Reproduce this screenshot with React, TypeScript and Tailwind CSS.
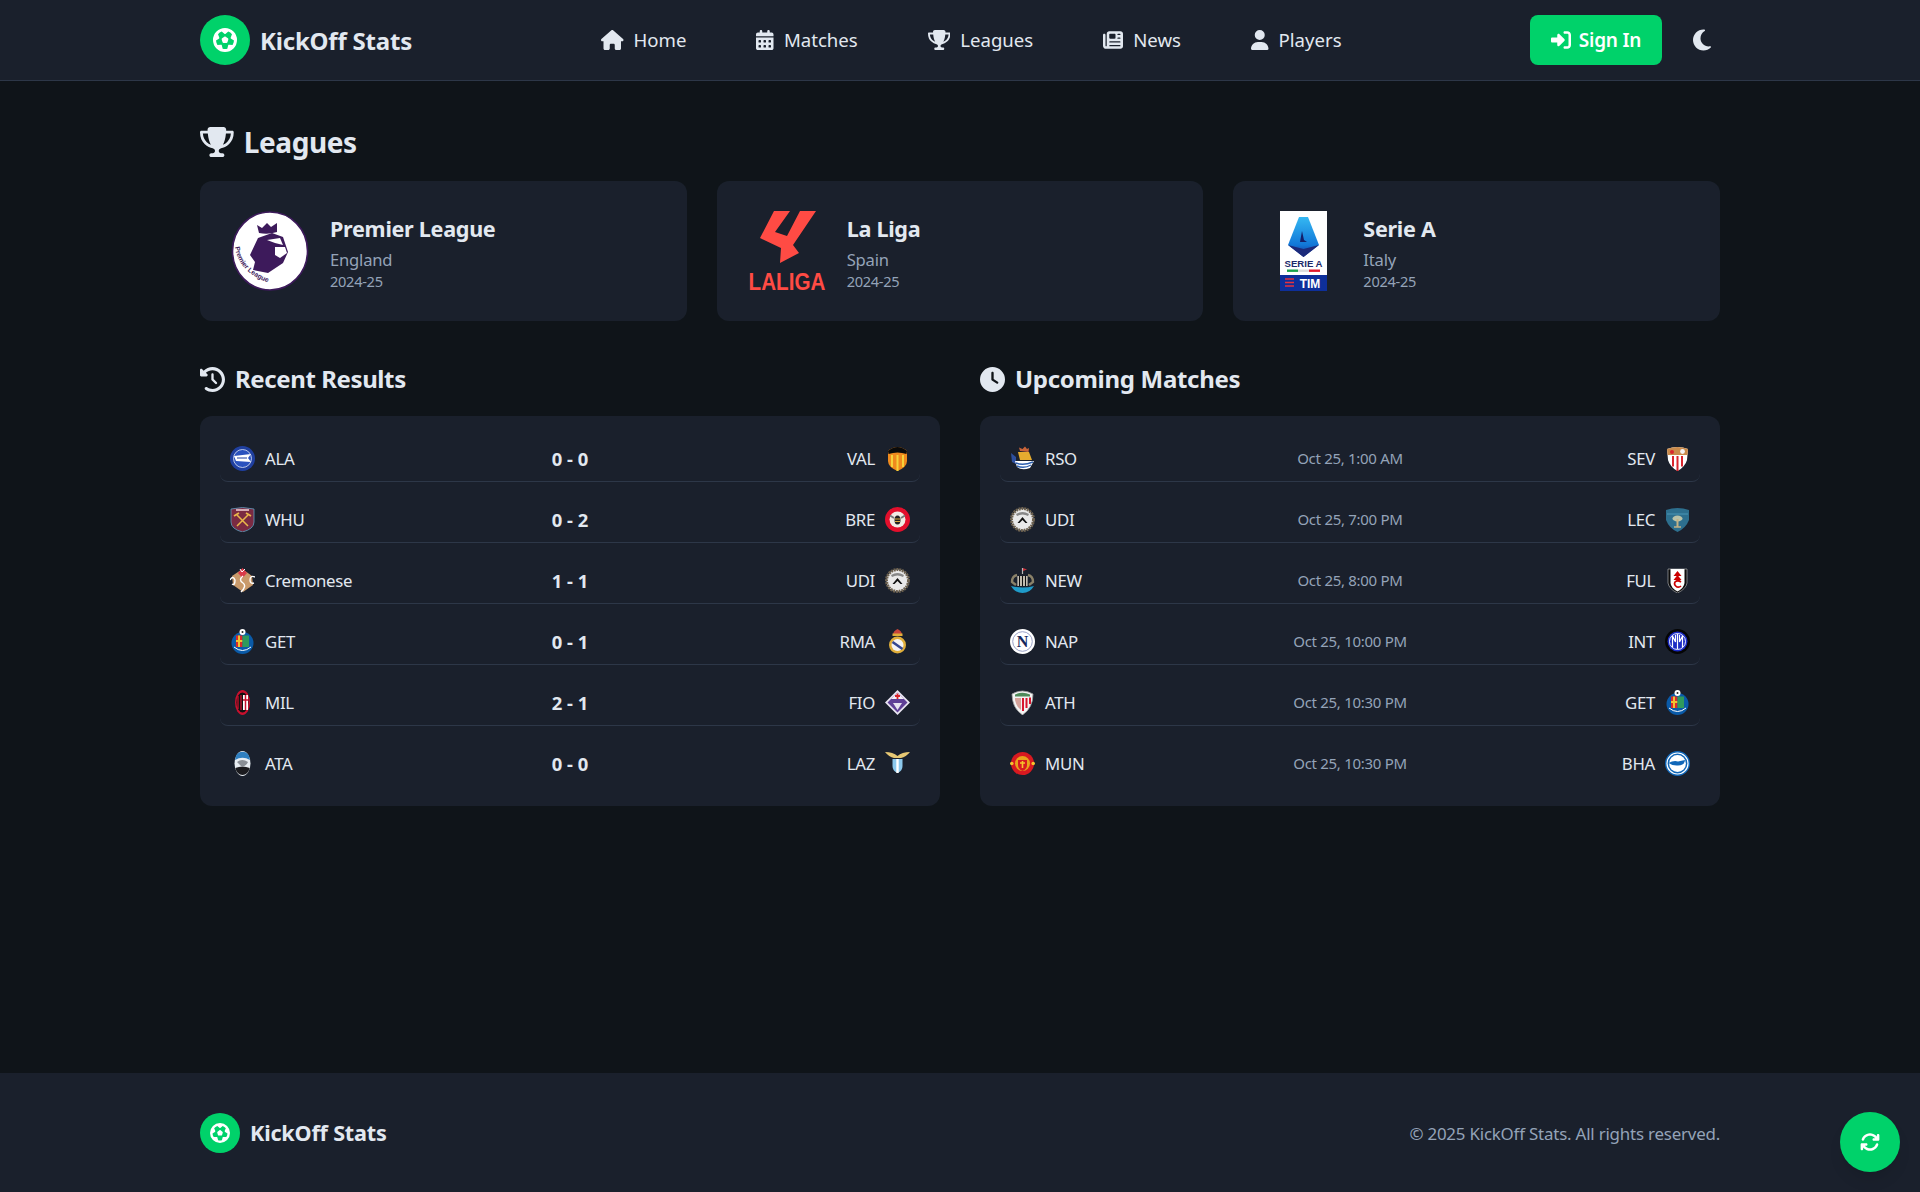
import React from 'react';
import {
  FaArrowsRotate,
  FaCalendarDays,
  FaClock,
  FaClockRotateLeft,
  FaFutbol,
  FaHouse,
  FaMoon,
  FaNewspaper,
  FaRightToBracket,
  FaTrophy,
  FaUser,
} from 'react-icons/fa6';

const crests: Record<string, React.ReactNode> = {
  ALA: (
    <>
      <circle cx="12.5" cy="12.5" r="12.5" fill="#1f3f9f" />
      <circle cx="12.5" cy="12.5" r="9" fill="#2a52be" stroke="#dfe6f5" strokeWidth="0.8" />
      <path d="M4 10 L21 8 L18 12 L21 16 L6 15 Z" fill="#fff" />
      <path d="M7 12 H17" stroke="#1f3f9f" strokeWidth="1" />
    </>
  ),
  WHU: (
    <>
      <path d="M1 2 Q12.5 -1 24 2 V15 Q24 22 12.5 25 Q1 22 1 15 Z" fill="#7a2a42" stroke="#5f9fc0" strokeWidth="0.8" />
      <path d="M7 8 L18 19 M18 8 L7 19" stroke="#eab84a" strokeWidth="1.5" />
      <path d="M4 9 L9 6 M21 9 L16 6" stroke="#eab84a" strokeWidth="1.8" />
      <rect x="6" y="2" width="13" height="2" fill="#d7a9b3" />
    </>
  ),
  Cremonese: (
    <>
      <path d="M12.5 1 L22 8 L23 17 L13 24 L3 17 L2 8 Z" fill="#c99a6b" />
      <path d="M12.5 0 L17 5 L12.5 10 L8 5 Z" fill="#d93a4a" />
      <path d="M10 1 L12 4 L15 1" stroke="#fff" strokeWidth="1" fill="none" />
      <path d="M0 12 Q3 7 5 12 Q5 18 2 16 M25 9 Q20 7 20 12 Q20 16 24 15 M13 8 Q8 12 13 15 Q17 18 11 24" stroke="#fff" strokeWidth="1.4" fill="none" />
    </>
  ),
  GET: (
    <>
      <circle cx="12.5" cy="14" r="11" fill="#0a5aa8" />
      <rect x="6" y="6.5" width="6.5" height="11.5" fill="#d92b2b" />
      <rect x="8" y="6.5" width="2" height="11.5" fill="#f2c230" />
      <rect x="6" y="11" width="6.5" height="2" fill="#f2c230" />
      <rect x="12.5" y="6.5" width="6.5" height="11.5" fill="#2f9a5c" />
      <circle cx="12.5" cy="3" r="3" fill="#fff" />
      <circle cx="12.5" cy="3" r="1" fill="#222" />
      <path d="M4 18 Q12.5 25 21 18" stroke="#fff" strokeWidth="1" fill="none" />
    </>
  ),
  MIL: (
    <>
      <ellipse cx="12.5" cy="12.5" rx="7.5" ry="12.5" fill="#c8102e" />
      <ellipse cx="12.5" cy="12.5" rx="6" ry="10" fill="#111" />
      <path d="M8 6 V19 M11 5 V20" stroke="#c8102e" strokeWidth="1.3" />
      <rect x="13" y="5" width="5" height="15" fill="#fff" />
      <path d="M15.5 5 V20 M13 10 H18" stroke="#c8102e" strokeWidth="1.5" />
    </>
  ),
  ATA: (
    <>
      <ellipse cx="12.5" cy="12.5" rx="8" ry="12.5" fill="#e8edf2" />
      <path d="M5 9 Q5.5 1 12.5 0.8 Q19.5 1 20 9 Q12.5 4.5 5 9 Z" fill="#2f7fc0" />
      <path d="M5.3 17 Q12.5 14 19.7 17 Q18 24 12.5 24 Q7 24 5.3 17 Z" fill="#1b1b1f" />
      <path d="M7 11 Q12 7 18 11 Q16 16 11 15 Z" fill="#8a8f96" />
    </>
  ),
  VAL: (
    <>
      <path d="M3 5 Q12.5 -3 22 5 V15 Q22 21 12.5 25 Q3 21 3 15 Z" fill="#f08a1d" />
      <path d="M7 9 V21 M12.5 9 V25 M18 9 V21" stroke="#f6d23a" strokeWidth="2" />
      <path d="M3 5 Q12.5 -3 22 5 L21.5 8 Q12.5 5 3.5 8 Z" fill="#0a0a0a" />
    </>
  ),
  BRE: (
    <>
      <circle cx="12.5" cy="12.5" r="12.5" fill="#e30f2c" />
      <circle cx="12.5" cy="12.5" r="8" fill="#f1ece4" />
      <ellipse cx="12.5" cy="13" rx="3" ry="4.5" fill="#222" />
      <path d="M9.8 12 H15.2 M10 14.5 H15" stroke="#d9a93a" strokeWidth="1" />
      <path d="M9 11 L5 8.5 M16 11 L20 8.5" stroke="#777" strokeWidth="2" />
    </>
  ),
  UDI: (
    <>
      <circle cx="12.5" cy="12.5" r="11" fill="#e9e9e9" stroke="#6e6250" strokeWidth="3" strokeDasharray="2 0.8" />
      <path d="M7.5 16 L12.5 10 L17.5 16 L15.5 16 L12.5 13 L9.5 16 Z" fill="#111" />
      <path d="M6 7 Q12.5 3 19 7 L18 9 Q12.5 6 7 9 Z" fill="#888" />
    </>
  ),
  RMA: (
    <>
      <path d="M8 6 Q8 2 12.5 0 Q17 2 17 6 Z" fill="#c9443a" />
      <rect x="7.5" y="4.5" width="10" height="2.5" fill="#e0ae3a" />
      <circle cx="12.5" cy="16" r="8.5" fill="#e0ae3a" />
      <circle cx="12.5" cy="16" r="6" fill="#f4f4f4" />
      <path d="M7.5 13 L17.5 20" stroke="#34478f" strokeWidth="2.6" />
    </>
  ),
  FIO: (
    <>
      <path d="M12.5 0 L25 12.5 L12.5 25 L0 12.5 Z" fill="#e9e4f2" />
      <path d="M12.5 2.5 L22.5 12.5 L12.5 22.5 L2.5 12.5 Z" fill="#5f3f96" />
      <path d="M6 9 L12.5 2.5 L19 9 Z" fill="#f3eef8" />
      <path d="M12.5 3.5 V9 M10 6 H15" stroke="#d8232a" strokeWidth="1.8" />
      <path d="M8 13 H17 L12.5 20 Z" fill="#fff" opacity="0.85" />
    </>
  ),
  LAZ: (
    <>
      <path d="M0 1 Q8 1 12.5 5 Q17 1 25 1 Q21 6 16 7 H9 Q4 6 0 1 Z" fill="#e7c874" />
      <path d="M7.5 8 H17.5 V15 Q17.5 20 12.5 22 Q7.5 20 7.5 15 Z" fill="#8cc8ec" />
      <path d="M12.5 8 V22" stroke="#fff" strokeWidth="2.4" />
    </>
  ),
  RSO: (
    <>
      <path d="M10 5 L9 1.5 L12.5 3 L15 0.5 L17 3 L19 2 L18.5 6 Z" fill="#c9643a" />
      <path d="M8 6 H19 L22 14 H10 Z" fill="#e6ab2f" />
      <path d="M1 7 L6 11 V18 L2 16 Z" fill="#2d4f9e" />
      <path d="M5 15 H24 L20 22 Q12 25 7 21 Z" fill="#fff" />
      <path d="M6 17 Q13 20 23 16 M7 20 Q14 23 21 19" stroke="#2d5fae" strokeWidth="1.4" fill="none" />
    </>
  ),
  SEV: (
    <>
      <path d="M2 3 Q12.5 -1 23 3 L22 14 Q20 21 12.5 25 Q5 21 3 14 Z" fill="#fff" />
      <path d="M8 10 V20.5 M12.5 10 V25 M17 10 V20.5" stroke="#d9262e" strokeWidth="2" />
      <path d="M2 3 Q12.5 -1 23 3 L22.5 9 H2.5 Z" fill="#c98a4b" />
      <circle cx="17.5" cy="5.5" r="2.4" fill="#f4f4f4" />
      <circle cx="7" cy="6" r="2" fill="#d9262e" />
    </>
  ),
  LEC: (
    <>
      <path d="M1 3 Q12.5 -1 24 3 V13 Q21 21 12.5 25 Q4 21 1 13 Z" fill="#2d6f8e" />
      <path d="M2 7 H23" stroke="#4b97b5" strokeWidth="1" />
      <ellipse cx="12.5" cy="11.5" rx="5" ry="3" fill="#b9c2a8" />
      <path d="M12.5 12 V20" stroke="#c2b184" strokeWidth="2" />
      <path d="M9 20 H16" stroke="#c2b184" strokeWidth="1.5" />
    </>
  ),
  NEW: (
    <>
      <path d="M12.5 0 V6" stroke="#b9b9b9" strokeWidth="1.2" />
      <path d="M13 0 L17 1.5 L13 3 Z" fill="#c8323a" />
      <path d="M7.5 8 H17.5 V18 H7.5 Z" fill="#efe8d8" />
      <path d="M9.5 8 V18 M12.5 8 V18 M15.5 8 V18" stroke="#111" strokeWidth="1.4" />
      <path d="M7 7 Q2 8 2 14 L6 17 M18 7 Q23 8 23 14 L19 17" stroke="#8a8168" strokeWidth="2.4" fill="none" />
      <path d="M1 18 Q12.5 21 24 18 Q20 25 12.5 25 Q5 25 1 18 Z" fill="#1f9bc9" />
    </>
  ),
  FUL: (
    <>
      <path d="M3 1 H22 V15 Q21 21 12.5 25 Q4 21 3 15 Z" fill="#0c0c0c" stroke="#ddd" strokeWidth="0.5" />
      <path d="M5.5 1 H19.5 V15 Q19 20 12.5 23.5 Q6 20 5.5 15 Z" fill="#fff" />
      <path d="M12.5 3 L16.5 8 H8.5 Z M12.5 7 L16.5 12 H8.5 Z" fill="#cc0000" />
      <path d="M16 14 Q12.5 11.5 10 14 Q8.5 17 12 19 Q14.5 19.5 16 18" stroke="#cc0000" strokeWidth="1.7" fill="none" />
    </>
  ),
  NAP: (
    <>
      <circle cx="12.5" cy="12.5" r="12.5" fill="#fff" />
      <circle cx="12.5" cy="12.5" r="9.8" fill="none" stroke="#9aa2c8" strokeWidth="1" />
      <text x="12.5" y="18" textAnchor="middle" fontFamily="'Liberation Serif', serif" fontWeight="700" fontSize="16" fill="#16285c">N</text>
    </>
  ),
  INT: (
    <>
      <circle cx="12.5" cy="12.5" r="12.5" fill="#050505" />
      <circle cx="12.5" cy="12.5" r="10" fill="#1c2bc4" />
      <circle cx="12.5" cy="12.5" r="8" fill="none" stroke="#fff" strokeWidth="0.9" />
      <path d="M7.5 18 V7 L10.5 13 V6 M14.5 6 V13 L17.5 7 V18 M12.5 5 V20" stroke="#fff" strokeWidth="1.2" fill="none" />
    </>
  ),
  ATH: (
    <>
      <path d="M2 4 Q12.5 -2 23 4 Q23 18 12.5 25 Q2 18 2 4 Z" fill="#f3f3f3" stroke="#9c9c9c" strokeWidth="0.8" />
      <path d="M13 8 V21 M16.5 8 V18 M20 7.5 V14" stroke="#d7172f" strokeWidth="2" />
      <path d="M5 8 H11 V20 Q6.5 17 5 10 Z" fill="#d6a39b" />
      <path d="M5 4.5 Q12.5 1 20 4.5 V6.5 H5 Z" fill="#4e8a5a" />
    </>
  ),
  MUN: (
    <>
      <circle cx="12.5" cy="12.5" r="11.5" fill="#d81920" />
      <circle cx="1.8" cy="12.5" r="1.8" fill="#f7c22c" />
      <circle cx="23.2" cy="12.5" r="1.8" fill="#f7c22c" />
      <circle cx="12.5" cy="12.5" r="7.5" fill="#e9a21c" />
      <path d="M8 9 H17 V14 Q17 18 12.5 20 Q8 18 8 14 Z" fill="#d81920" />
      <path d="M10 12 H15 M12.5 10 V17" stroke="#f7c22c" strokeWidth="1.6" />
    </>
  ),
  BHA: (
    <>
      <circle cx="12.5" cy="12.5" r="12.5" fill="#1167b8" />
      <circle cx="12.5" cy="12.5" r="10.5" fill="none" stroke="#fff" strokeWidth="1.2" />
      <circle cx="12.5" cy="12.5" r="8.4" fill="#fff" />
      <path d="M3.5 12 Q9 9 13 10.5 L20 9 Q20 14 13 14.5 Q8 15 3.5 12 Z" fill="#1167b8" />
    </>
  ),
};

const Crest = ({ name }: { name: string }) => (
  <svg viewBox="0 0 25 25" className="w-[25px] h-[25px] shrink-0">
    {crests[name]}
  </svg>
);

const PremierLeagueLogo = () => (
  <svg viewBox="0 0 80 80" className="w-20 h-20 shrink-0">
    <ellipse cx="40" cy="40" rx="37.5" ry="39" fill="#fff" stroke="#3d1a5b" strokeWidth="1.6" />
    <path d="M29 22 L27 14 L32 17 L37 12 L41 16 L47 12 L47 21 Q38 24 29 22 Z" fill="#3d1a5b" />
    <path d="M28 27 L20 44 L25 51 L23 59 L38 62 L53 52 L58 41 L53 26 L42 22 Z" fill="#3d1a5b" />
    <path d="M37 29 L50 27 L53 34 L45 32 Z" fill="#fff" />
    <path d="M45 36 L55 36 L57 42 L50 47 L45 44 Z" fill="#fff" />
    <defs>
      <path id="pl-arc" d="M5 36 Q9 64 46 74" />
    </defs>
    <text fontFamily="'Liberation Sans', sans-serif" fontWeight="700" fontSize="6.8" fill="#3d1a5b">
      <textPath href="#pl-arc">Premier League</textPath>
    </text>
  </svg>
);

const LaLigaLogo = () => (
  <svg viewBox="0 0 80 80" className="w-20 h-20 shrink-0 overflow-visible">
    <path d="M27 0 H43 L28 21 L40 25 L53 0 H69 L46 34 L52 42 L33 52 L34 37 L13 27 Z" fill="#ff4b44" />
    <text transform="translate(40 79) scale(0.86 1)" textAnchor="middle" fontFamily="'Liberation Sans', sans-serif" fontWeight="700" fontSize="24" fill="#ff4b44">LALIGA</text>
  </svg>
);

const SerieALogo = () => (
  <svg viewBox="0 0 80 80" className="w-20 h-20 shrink-0">
    <defs>
      <linearGradient id="sa-kite" x1="0" y1="0" x2="0" y2="1">
        <stop offset="0" stopColor="#35b8f2" />
        <stop offset="0.7" stopColor="#1177d8" />
        <stop offset="1" stopColor="#1a2a8c" />
      </linearGradient>
    </defs>
    <rect x="17" width="47" height="80" fill="#fff" />
    <path d="M36 6 H45 L56 34 L40.5 46 L25 34 Z" fill="url(#sa-kite)" />
    <path d="M25 34 L40.5 38 L56 34 L40.5 46 Z" fill="#1c2a7a" />
    <path d="M39 20 L37 31 H44 L41 29 Z" fill="#13206a" />
    <text x="40.5" y="56" textAnchor="middle" fontFamily="'Liberation Sans', sans-serif" fontWeight="700" fontSize="9.6" fill="#1c2a6a">SERIE A</text>
    <rect x="24" y="58.5" width="11" height="2.4" fill="#1aa14c" />
    <rect x="35" y="58.5" width="11" height="2.4" fill="#dcdcdc" />
    <rect x="46" y="58.5" width="11" height="2.4" fill="#e0182d" />
    <rect x="17" y="64" width="47" height="16" fill="#0e2f9a" />
    <path d="M22 68 H31 M22 71.5 H31 M22 75 H31" stroke="#e8323c" strokeWidth="1.5" />
    <text x="47" y="77" textAnchor="middle" fontFamily="'Liberation Sans', sans-serif" fontWeight="700" fontSize="12" fill="#fff">TIM</text>
  </svg>
);

const navItems = [
  { label: 'Home', icon: FaHouse, size: 'w-[22.5px] h-5' },
  { label: 'Matches', icon: FaCalendarDays, size: 'w-[17.5px] h-5' },
  { label: 'Leagues', icon: FaTrophy, size: 'w-[22.5px] h-5' },
  { label: 'News', icon: FaNewspaper, size: 'w-5 h-5' },
  { label: 'Players', icon: FaUser, size: 'w-[17.5px] h-5' },
];

const leagues = [
  { name: 'Premier League', country: 'England', logo: <PremierLeagueLogo /> },
  { name: 'La Liga', country: 'Spain', logo: <LaLigaLogo /> },
  { name: 'Serie A', country: 'Italy', logo: <SerieALogo /> },
];

const results = [
  ['ALA', '0 - 0', 'VAL'],
  ['WHU', '0 - 2', 'BRE'],
  ['Cremonese', '1 - 1', 'UDI'],
  ['GET', '0 - 1', 'RMA'],
  ['MIL', '2 - 1', 'FIO'],
  ['ATA', '0 - 0', 'LAZ'],
];

const upcoming = [
  ['RSO', 'Oct 25, 1:00 AM', 'SEV'],
  ['UDI', 'Oct 25, 7:00 PM', 'LEC'],
  ['NEW', 'Oct 25, 8:00 PM', 'FUL'],
  ['NAP', 'Oct 25, 10:00 PM', 'INT'],
  ['ATH', 'Oct 25, 10:30 PM', 'GET'],
  ['MUN', 'Oct 25, 10:30 PM', 'BHA'],
];

const MatchCard = ({ rows, isResult }: { rows: string[][]; isResult?: boolean }) => (
  <div className="bg-[#1a202c] rounded-xl p-5">
    {rows.map(([home, middle, away], i) => (
      <div
        key={home}
        className={`flex items-center px-2.5 py-2.5 rounded-lg ${i < rows.length - 1 ? 'border-b border-[#2d3748] mb-[15px]' : ''}`}
      >
        <div className="flex-1 flex items-center gap-2.5 min-w-0">
          <Crest name={home} />
          <span className="text-[16.8px] leading-[25px] tracking-[-0.3px] text-[#e2e8f0]">{home}</span>
        </div>
        {isResult ? (
          <span className="text-[18.4px] leading-[25px] font-bold text-[#e2e8f0]">{middle}</span>
        ) : (
          <span className="text-[15px] leading-[25px] tracking-[-0.3px] text-[#94a3b8]">{middle}</span>
        )}
        <div className="flex-1 flex items-center justify-end gap-2.5 min-w-0">
          <span className="text-[16.8px] leading-[25px] tracking-[-0.3px] text-[#e2e8f0]">{away}</span>
          <Crest name={away} />
        </div>
      </div>
    ))}
  </div>
);

export default function App() {
  return (
    <div className="min-h-screen flex flex-col bg-[#0f1419] text-[#e2e8f0] font-['Noto_Sans','Open_Sans',sans-serif]">
      <header className="h-[81px] bg-[#1a202c] border-b border-[#2d3748]">
        <div className="w-[1520px] mx-auto h-full flex items-center">
          <div className="flex items-center gap-2.5 w-[401px]">
            <div className="w-[50px] h-[50px] rounded-full bg-[#00d26a] flex items-center justify-center">
              <FaFutbol className="text-white text-2xl" />
            </div>
            <span className="text-2xl font-bold tracking-[-0.2px] whitespace-nowrap pt-0.5">KickOff Stats</span>
          </div>
          <nav className="flex items-center gap-[70px]">
            {navItems.map(({ label, icon: Icon, size }) => (
              <a key={label} className="flex items-center gap-2.5 text-[18.6px] whitespace-nowrap">
                <Icon className={`${size} shrink-0`} />
                {label}
              </a>
            ))}
          </nav>
          <div className="ml-auto flex items-center gap-7 pr-1.5">
            <button className="w-[132px] h-[50px] rounded-lg bg-[#00d26a] text-white text-[19px] font-semibold tracking-[-0.2px] flex items-center justify-center gap-2">
              <FaRightToBracket className="text-[20px]" />
              Sign In
            </button>
            <FaMoon className="text-[24px]" />
          </div>
        </div>
      </header>

      <main className="flex-1 w-[1520px] mx-auto pt-[40px]">
        <h2 className="flex items-center gap-2.5 text-[28px] leading-[42px] font-bold tracking-[-0.4px] mb-[18px]">
          <FaTrophy className="w-[33.75px] h-[30px]" />
          Leagues
        </h2>
        <div className="grid grid-cols-3 gap-[30px]">
          {leagues.map(league => (
            <div key={league.name} className="bg-[#1a202c] rounded-xl p-[30px] h-[140px] flex items-center gap-5">
              {league.logo}
              <div className="pt-0.5">
                <h3 className="text-[21.6px] leading-[30px] font-bold tracking-[-0.3px]">{league.name}</h3>
                <p className="text-[16.6px] leading-6 tracking-[-0.2px] text-[#94a3b8] mt-1">{league.country}</p>
                <p className="text-[14.6px] leading-[18px] tracking-[-0.3px] text-[#94a3b8]">2024-25</p>
              </div>
            </div>
          ))}
        </div>
        <div className="grid grid-cols-2 gap-10 mt-[40px]">
          <section>
            <h2 className="flex items-center gap-2.5 text-2xl leading-9 font-bold tracking-[-0.4px] mb-[19px]">
              <FaClockRotateLeft className="text-[25px]" />
              Recent Results
            </h2>
            <MatchCard rows={results} isResult />
          </section>
          <section>
            <h2 className="flex items-center gap-2.5 text-2xl leading-9 font-bold tracking-[-0.3px] mb-[19px]">
              <FaClock className="text-[25px]" />
              Upcoming Matches
            </h2>
            <MatchCard rows={upcoming} />
          </section>
        </div>
      </main>

      <footer className="h-[119px] bg-[#1a202c]">
        <div className="w-[1520px] mx-auto h-full flex items-center justify-between">
          <div className="flex items-center gap-2.5">
            <div className="w-10 h-10 rounded-full bg-[#00d26a] flex items-center justify-center">
              <FaFutbol className="text-white text-[20px]" />
            </div>
            <span className="text-[21.6px] font-bold tracking-[-0.2px] pt-0.5">KickOff Stats</span>
          </div>
          <p className="text-[16.9px] tracking-[-0.2px] text-[#94a3b8] pt-0.5">© 2025 KickOff Stats. All rights reserved.</p>
        </div>
      </footer>

      <button className="fixed right-5 bottom-5 w-[60px] h-[60px] rounded-full bg-[#00d26a] text-white flex items-center justify-center shadow-lg">
        <FaArrowsRotate className="text-[20px]" />
      </button>
    </div>
  );
}
